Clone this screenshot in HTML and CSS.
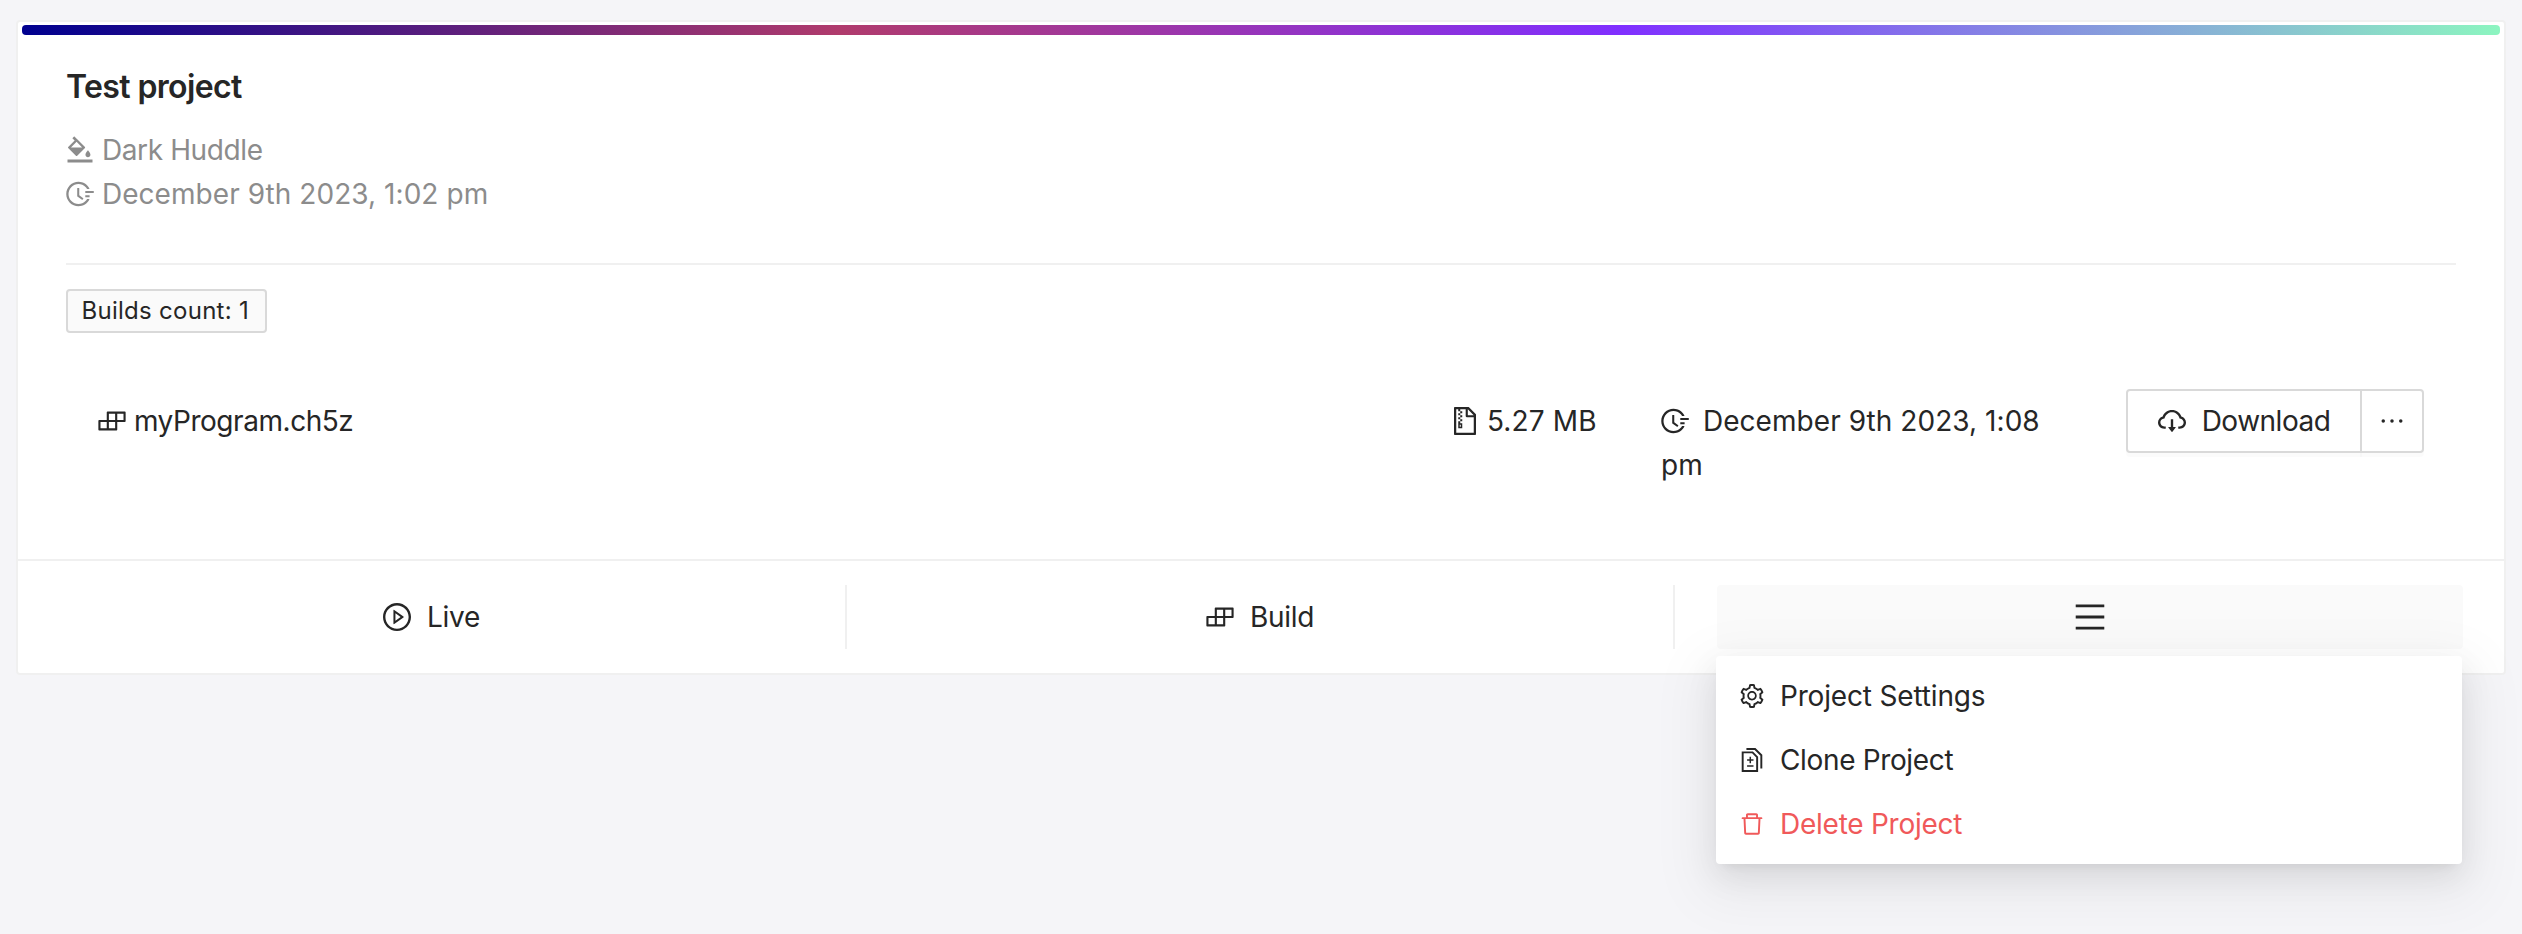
FILE: index.html
```html
<!DOCTYPE html>
<html lang="en">
<head>
<meta charset="utf-8">
<title>Test project</title>
<link rel="stylesheet" href="styles.css">
</head>
<body>
<svg class="sprite" width="0" height="0">
  <symbol id="i-bg" viewBox="64 64 896 896"><path d="M766.4 744.3c43.7 0 79.4-36.2 79.4-80.5 0-53.5-79.4-140.8-79.4-140.8S687 610.3 687 663.8c0 44.3 35.7 80.5 79.4 80.5zm-377.1-44.1c7.1 7.1 18.6 7.1 25.6 0l256.1-256c7.1-7.1 7.1-18.6 0-25.6l-256-256c-.6-.6-1.3-1.2-2-1.7l-78.2-78.2a9.11 9.11 0 00-12.8 0l-48 48a9.11 9.11 0 000 12.8l67.2 67.2-207.8 207.9c-7.1 7.1-7.1 18.6 0 25.6l255.9 256zm12.9-448.6l178.9 178.9H223.4l178.8-178.9zM904 816H120c-4.4 0-8 3.6-8 8v80c0 4.4 3.6 8 8 8h784c4.4 0 8-3.6 8-8v-80c0-4.4-3.6-8-8-8z"/></symbol>
  <symbol id="i-time" viewBox="64 64 896 896"><path d="M945 412H689c-4.4 0-8 3.6-8 8v48c0 4.4 3.6 8 8 8h256c4.4 0 8-3.6 8-8v-48c0-4.4-3.6-8-8-8zM811 548H689c-4.4 0-8 3.6-8 8v48c0 4.4 3.6 8 8 8h122c4.4 0 8-3.6 8-8v-48c0-4.4-3.6-8-8-8zM477.3 322.5H434c-6.2 0-11.2 5-11.2 11.2v248c0 3.6 1.7 6.9 4.6 9l148.9 108.6c5 3.6 12 2.6 15.6-2.4l25.7-35.1v-.1c3.6-5 2.5-12-2.5-15.6l-126.7-91.6V333.7c.1-6.2-5-11.2-11.1-11.2z"/><path d="M804.8 673.9H747c-5.6 0-10.9 2.9-13.9 7.7a321 321 0 01-44.5 55.7 317.17 317.17 0 01-101.3 68.3c-39.3 16.6-81 25-124 25-43.1 0-84.8-8.4-124-25-37.9-16-72-39-101.3-68.3s-52.3-63.4-68.3-101.3c-16.6-39.2-25-80.9-25-124 0-43.1 8.4-84.7 25-124 16-37.9 39-72 68.3-101.3 29.3-29.3 63.4-52.3 101.3-68.3 39.2-16.6 81-25 124-25 43.1 0 84.8 8.4 124 25 37.9 16 72 39 101.3 68.3a321 321 0 0144.5 55.7c3 4.8 8.3 7.7 13.9 7.7h57.8c6.9 0 11.3-7.2 8.2-13.3-65.2-129.7-197.4-214-345-215.7-216.1-2.7-395.6 174.2-396 390.1C71.6 727.5 246.9 903 463.3 903c149.5 0 283.9-84.6 349.8-215.8a9.2 9.2 0 00-8.3-13.3z"/></symbol>
  <symbol id="i-build" viewBox="64 64 896 896"><path d="M916 210H376c-17.7 0-32 14.3-32 32v236H108c-17.7 0-32 14.3-32 32v272c0 17.7 14.3 32 32 32h540c17.7 0 32-14.3 32-32V546h236c17.7 0 32-14.3 32-32V242c0-17.7-14.3-32-32-32zm-504 68h200v200H412V278zm-68 468H144V546h200v200zm268 0H412V546h200v200zm268-268H680V278h200v200z"/></symbol>
  <symbol id="i-zip" viewBox="64 64 896 896"><path d="M296 392h64v64h-64zm0 190v160h128V582h-64v-62h-64v62zm80 48v64h-32v-64h32zm-16-302h64v64h-64zm-64-64h64v64h-64zm64 192h64v64h-64zm0-256h64v64h-64zm494.6 88.6L639.4 73.4c-6-6-14.1-9.4-22.6-9.4H192c-17.7 0-32 14.3-32 32v832c0 17.7 14.3 32 32 32h640c17.7 0 32-14.3 32-32V311.3c0-8.5-3.4-16.7-9.4-22.7zM602 137.8L790.2 326H602V137.8zM792 888H232V136h64v64h64v-64h174v216a42 42 0 0042 42h216v494z"/></symbol>
  <symbol id="i-cloud" viewBox="64 64 896 896"><path d="M624 706.3h-74.1V464c0-4.4-3.6-8-8-8h-60c-4.4 0-8 3.6-8 8v242.3H400c-6.7 0-10.4 7.7-6.3 12.9l112 141.7a8 8 0 0012.6 0l112-141.7c4.1-5.2.4-12.9-6.3-12.9z"/><path d="M811.4 366.7C765.6 245.9 648.9 160 512.2 160S258.8 245.8 213 366.6C127.3 389.1 64 467.2 64 560c0 110.5 89.5 200 199.9 200H304c4.4 0 8-3.6 8-8v-60c0-4.4-3.6-8-8-8h-40.1c-33.7 0-65.4-13.4-89-37.7-23.5-24.2-36-56.8-34.9-90.6.9-26.4 9.9-51.2 26.2-72.1 16.7-21.3 40.1-36.8 66.1-43.7l37.9-9.9 13.9-36.6c8.6-22.8 20.6-44.1 35.7-63.4a245.6 245.6 0 0152.4-49.9c41.1-28.9 89.5-44.2 140-44.2s98.9 15.3 140 44.2c19.9 14 37.5 30.8 52.4 49.9 15.1 19.3 27.1 40.7 35.7 63.4l13.8 36.5 37.8 10C846.1 454.5 884 503.8 884 560c0 33.1-12.9 64.3-36.3 87.7a123.07 123.07 0 01-87.6 36.3H720c-4.4 0-8 3.6-8 8v60c0 4.4 3.6 8 8 8h40.1C870.5 760 960 670.5 960 560c0-92.7-63.1-170.7-148.6-193.3z"/></symbol>
  <symbol id="i-dots" viewBox="64 64 896 896"><path d="M176 511a56 56 0 10112 0 56 56 0 10-112 0zm280 0a56 56 0 10112 0 56 56 0 10-112 0zm280 0a56 56 0 10112 0 56 56 0 10-112 0z"/></symbol>
  <symbol id="i-play" viewBox="64 64 896 896"><path d="M512 64C264.6 64 64 264.6 64 512s200.6 448 448 448 448-200.6 448-448S759.4 64 512 64zm0 820c-205.4 0-372-166.6-372-372s166.6-372 372-372 372 166.6 372 372-166.6 372-372 372z"/><path d="M719.4 499.1l-296.1-215A15.9 15.9 0 00398 297v430c0 13.1 14.8 20.5 25.3 12.9l296.1-215a15.9 15.9 0 000-25.8zm-257.6 134V390.9L628.5 512 461.8 633.1z"/></symbol>
  <symbol id="i-menu" viewBox="64 64 896 896"><path d="M904 160H120c-4.400 0-8 3.600-8 8v64c0 4.400 3.600 8 8 8h784c4.400 0 8-3.600 8-8v-64c0-4.400-3.600-8-8-8zm0 624H120c-4.400 0-8 3.600-8 8v64c0 4.400 3.600 8 8 8h784c4.400 0 8-3.600 8-8v-64c0-4.400-3.600-8-8-8zm0-312H120c-4.400 0-8 3.600-8 8v64c0 4.400 3.600 8 8 8h784c4.400 0 8-3.600 8-8v-64c0-4.400-3.600-8-8-8z"/></symbol>
  <symbol id="i-gear" viewBox="64 64 896 896"><path d="M924.8 625.7l-65.5-56c3.1-19 4.7-38.4 4.7-57.8s-1.6-38.8-4.7-57.8l65.5-56a32.03 32.03 0 009.3-35.2l-.9-2.6a443.74 443.74 0 00-79.7-137.9l-1.8-2.1a32.12 32.12 0 00-35.1-9.5l-81.3 28.9c-30-24.6-63.5-44-99.7-57.6l-15.7-85a32.05 32.05 0 00-25.8-25.7l-2.7-.5c-52.1-9.4-106.9-9.4-159 0l-2.7.5a32.05 32.05 0 00-25.8 25.7l-15.8 85.4a351.86 351.86 0 00-99 57.4l-81.9-29.1a32 32 0 00-35.1 9.5l-1.8 2.1a446.02 446.02 0 00-79.7 137.9l-.9 2.6c-4.5 12.5-.8 26.5 9.3 35.2l66.3 56.6c-3.1 18.8-4.6 38-4.6 57.1 0 19.2 1.5 38.4 4.6 57.1L99 625.5a32.03 32.03 0 00-9.3 35.2l.9 2.6c18.1 50.4 44.9 96.9 79.7 137.9l1.8 2.1a32.12 32.12 0 0035.1 9.5l81.9-29.1c29.8 24.5 63.1 43.9 99 57.4l15.8 85.4a32.05 32.05 0 0025.8 25.7l2.7.5a449.4 449.4 0 00159 0l2.7-.5a32.05 32.05 0 0025.8-25.7l15.7-85a350 350 0 0099.7-57.6l81.3 28.9a32 32 0 0035.1-9.5l1.8-2.1c34.8-41.1 61.6-87.5 79.7-137.9l.9-2.6c4.5-12.300.8-26.300-9.300-35zM788.300 465.900c2.500 15.100 3.800 30.600 3.800 46.100s-1.300 31-3.800 46.100l-6.600 40.100 74.700 63.900a370.030 370.030 0 01-42.600 73.600L721 702.800l-31.400 25.800c-23.900 19.600-50.500 35-79.300 45.800l-38.100 14.300-17.900 97a377.500 377.500 0 01-85 0l-17.900-97.200-37.800-14.500c-28.500-10.800-55-26.200-78.700-45.700l-31.400-25.900-93.400 33.200c-17-22.900-31.200-47.600-42.600-73.600l75.500-64.500-6.500-40c-2.400-14.900-3.700-30.300-3.700-45.500 0-15.300 1.200-30.600 3.700-45.500l6.500-40-75.500-64.500c11.300-26.100 25.600-50.700 42.600-73.600l93.400 33.200 31.400-25.900c23.700-19.500 50.200-34.900 78.700-45.700l37.900-14.300 17.900-97.200c28.100-3.200 56.800-3.200 85 0l17.900 97 38.100 14.300c28.700 10.800 55.400 26.200 79.300 45.800l31.400 25.800 92.800-32.900c17 22.900 31.200 47.600 42.600 73.600L781.800 426l6.500 39.900zM512 326c-97.200 0-176 78.800-176 176s78.800 176 176 176 176-78.800 176-176-78.800-176-176-176zm79.200 255.200A111.600 111.600 0 01512 614c-29.900 0-58-11.700-79.200-32.800A111.600 111.600 0 01400 502c0-29.900 11.700-58 32.800-79.200C454 401.600 482.100 390 512 390c29.900 0 58 11.600 79.200 32.800A111.600 111.600 0 01624 502c0 29.900-11.700 58-32.800 79.200z"/></symbol>
  <symbol id="i-copy" viewBox="64 64 896 896"><path d="M476 399.1c0-3.900-3.100-7.100-7-7.100h-42c-3.800 0-7 3.200-7 7.100V484h-84.500c-4.100 0-7.500 3.100-7.500 7v42c0 3.800 3.400 7 7.500 7H420v84.900c0 3.900 3.200 7.100 7 7.100h42c3.900 0 7-3.200 7-7.100V540h84.500c4.100 0 7.500-3.200 7.500-7v-42c0-3.900-3.400-7-7.500-7H476v-84.900zM335.500 704h225c4.100 0 7.500 3.200 7.500 7v42c0 3.800-3.400 7-7.500 7h-225c-4.100 0-7.500-3.200-7.500-7v-42c0-3.800 3.400-7 7.500-7z"/><path class="stroked" d="M164 228H532L704 402V924H164ZM304 100H626L860 334V830"/></symbol>
  <symbol id="i-trash" viewBox="64 64 896 896"><path d="M360 184h-8c4.400 0 8-3.600 8-8v8h304v-8c0 4.400 3.600 8 8 8h-8v72h72v-80c0-35.300-28.700-64-64-64H352c-35.300 0-64 28.700-64 64v80h72v-72zm504 72H160c-17.700 0-32 14.300-32 32v32c0 4.400 3.600 8 8 8h60.400l24.700 523c1.600 34.100 29.800 61 63.900 61h454c34.200 0 62.300-26.800 63.900-61l24.700-523H888c4.400 0 8-3.600 8-8v-32c0-17.700-14.300-32-32-32zM731.300 840H292.700l-24.200-512h487l-24.200 512z"/></symbol>
</svg>

<article class="card">
  <div class="ribbon"></div>
  <div class="body">
    <h1 class="title">Test project</h1>
    <div class="meta">
      <div><svg class="icon"><use href="#i-bg"/></svg> <span class="t-theme">Dark Huddle</span></div>
      <div><svg class="icon"><use href="#i-time"/></svg> <span class="t-date">December 9th 2023, 1:02 pm</span></div>
    </div>
    <hr class="divider">
    <span class="tag">Builds count: 1</span>
    <div class="row">
      <div class="file"><svg class="icon"><use href="#i-build"/></svg> <span class="t-file">myProgram.ch5z</span></div>
      <div class="size"><svg class="icon"><use href="#i-zip"/></svg> <span class="t-size">5.27 MB</span></div>
      <div class="date"><svg class="icon"><use href="#i-time"/></svg> <span class="t-date">December 9th 2023, 1:08<br>pm</span></div>
      <div class="buttons">
        <button class="btn download"><svg class="icon"><use href="#i-cloud"/></svg><span>Download</span></button>
        <button class="btn more"><svg class="icon"><use href="#i-dots"/></svg></button>
      </div>
    </div>
  </div>
  <footer class="actions">
    <div class="action"><svg class="icon"><use href="#i-play"/></svg><span>Live</span></div>
    <div class="action build"><svg class="icon"><use href="#i-build"/></svg><span>Build</span></div>
    <div class="action">
      <div class="trigger"><svg class="icon menu-icon"><use href="#i-menu"/></svg>
        <div class="dropdown">
          <div class="item"><svg class="icon"><use href="#i-gear"/></svg><span>Project Settings</span></div>
          <div class="item clone"><svg class="icon"><use href="#i-copy"/></svg><span>Clone Project</span></div>
          <div class="item danger"><svg class="icon"><use href="#i-trash"/></svg><span>Delete Project</span></div>
        </div>
      </div>
    </div>
  </footer>
</article>
</body>
</html>
```
FILE: styles.css
```css
* { box-sizing: border-box; }
body {
  margin: 0;
  padding: 20px 16px 0 16px;
  height: 934px;
  overflow: hidden;
  background: #f5f5f8;
  color: #262626;
  font: 28px/44px Inter, sans-serif;
}
.sprite { position: absolute; }
.icon { width: 28px; height: 28px; fill: currentColor; flex: none; vertical-align: -3.5px; }
.stroked { fill: none; stroke: currentColor; stroke-width: 72; }
.card {
  width: 2490px;
  height: 655px;
  background: #fff;
  border: 2px solid #f0f0f0;
  border-radius: 4px;
  display: flex;
  flex-direction: column;
}
.ribbon {
  height: 10px;
  margin: 3px 4px 0;
  border-radius: 4px;
  flex: none;
  background: linear-gradient(90deg, #00008f, #b03b6c 33%, #802fff 64.5%, #8cf5c0);
}
.body { padding: 29px 48px 0; flex: 1; }
.title { margin: 0; font-size: 32px; line-height: 46px; font-weight: 600; letter-spacing: -.62px; }
.meta { margin-top: 18px; color: #8c8c8c; }
.t-theme { letter-spacing: -.38px; }
.t-date { letter-spacing: .06px; }
.t-file { letter-spacing: -.45px; }
.t-size { letter-spacing: .15px; }
.divider { margin: 47px 0 24px; border: 0; height: 2px; background: #f0f0f0; }
.tag {
  display: block;
  width: 201px;
  height: 44px;
  padding: 0 13.5px;
  border: 2px solid #d9d9d9;
  border-radius: 4px;
  background: #fafafa;
  font-size: 24px;
  line-height: 40px;
  letter-spacing: .27px;
  white-space: nowrap;
}
.row { display: flex; height: 100px; margin-top: 56px; padding-left: 32px; white-space: nowrap; }
.row > div { padding-top: 10px; }
.file { width: 1353px; }
.size { width: 210px; }
.date { width: 465px; }
.date .icon { margin-right: 6px; }
.row .buttons { display: flex; padding-top: 0; }
.btn {
  height: 64px;
  display: flex;
  align-items: center;
  justify-content: center;
  background: #fff;
  border: 2px solid #d9d9d9;
  color: inherit;
  font: inherit;
  padding: 0;
  box-shadow: 0 4px 0 rgba(0, 0, 0, .016);
}
.download { width: 236px; gap: 16px; border-radius: 4px 0 0 4px; letter-spacing: -.5px; }
.more { width: 64px; margin-left: -2px; border-radius: 0 4px 4px 0; }
.actions { height: 114px; border-top: 2px solid #f0f0f0; padding: 24px 0; display: flex; }
.action {
  width: 829px;
  height: 64px;
  display: flex;
  align-items: center;
  justify-content: center;
  gap: 16px;
  border-right: 2px solid #f0f0f0;
  letter-spacing: -.3px;
}
.action.build { width: 828px; }
.action:last-child { border-right: 0; padding-left: 1px; }
.trigger {
  position: relative;
  width: 746px;
  height: 64px;
  border-radius: 4px;
  background: #fafafa;
  display: flex;
  align-items: center;
  justify-content: center;
}
.menu-icon { width: 32px; height: 32px; }
.dropdown {
  position: absolute;
  top: 71px;
  left: -1px;
  width: 746px;
  height: 208px;
  padding: 8px 0;
  background: #fff;
  border-radius: 4px;
  box-shadow: 0 6px 12px -8px rgba(0, 0, 0, .12), 0 12px 32px rgba(0, 0, 0, .08), 0 18px 56px 16px rgba(0, 0, 0, .05);
}
.item { height: 64px; padding: 0 24px; display: flex; align-items: center; gap: 16px; letter-spacing: -.17px; }
.item .icon { width: 24px; height: 24px; }
.item.clone { letter-spacing: -.35px; }
.item.danger { color: #f0595a; letter-spacing: -.25px; }
```
